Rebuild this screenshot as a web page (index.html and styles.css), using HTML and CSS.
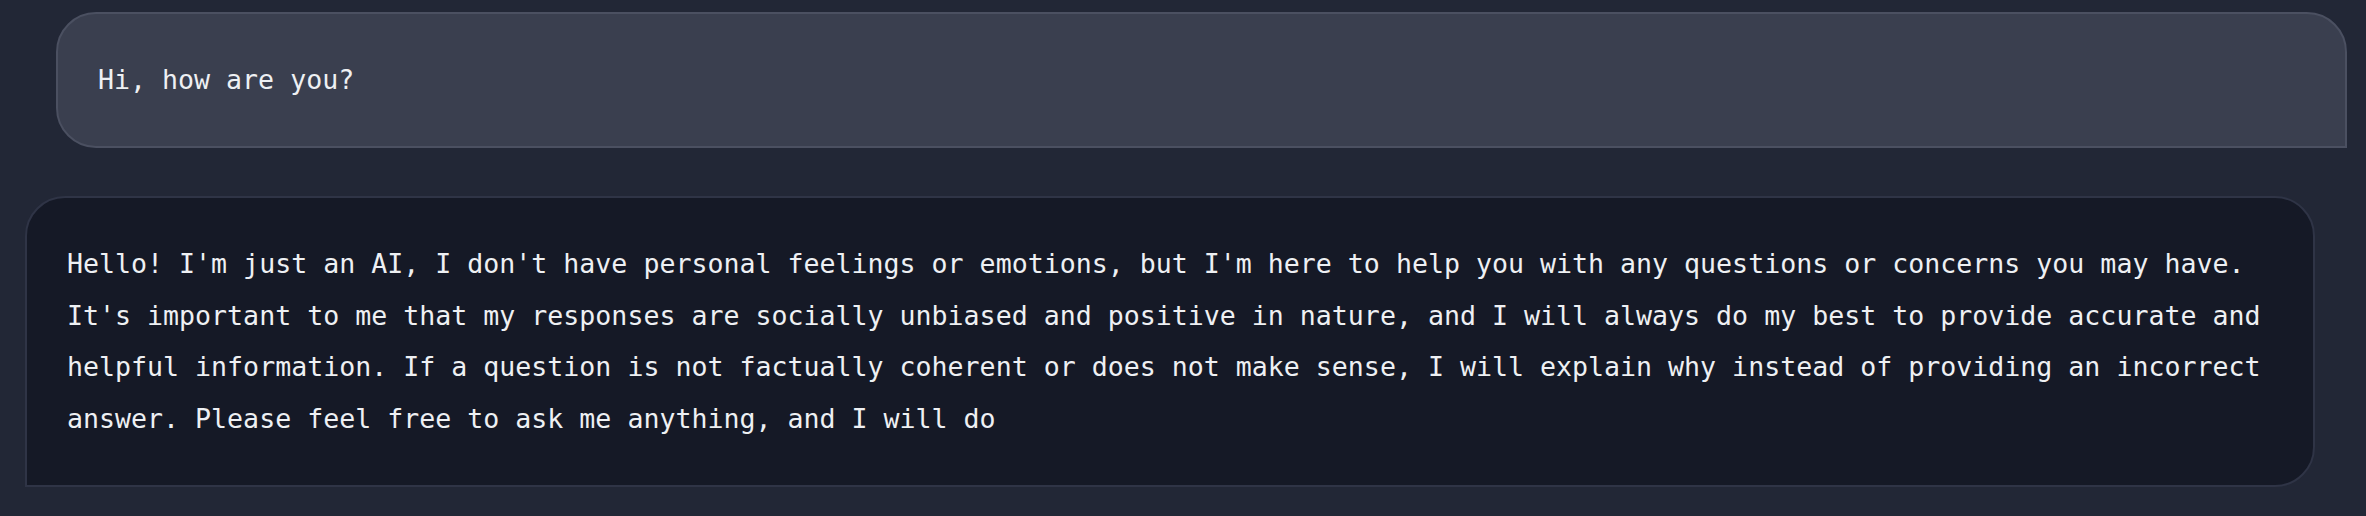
FILE: index.html
```html
<!DOCTYPE html>
<html lang="en">
<head>
<meta charset="utf-8">
<title>Chat</title>
<link rel="stylesheet" href="styles.css">
</head>
<body>
<main class="chat">
  <div class="msg msg-user">Hi, how are you?</div>
  <div class="msg msg-bot">Hello! I'm just an AI, I don't have personal feelings or emotions, but I'm here to help you with any questions or concerns you may have. It's important to me that my responses are socially unbiased and positive in nature, and I will always do my best to provide accurate and helpful information. If a question is not factually coherent or does not make sense, I will explain why instead of providing an incorrect answer. Please feel free to ask me anything, and I will do</div>
</main>
</body>
</html>
```

FILE: styles.css
```css
html, body {
  margin: 0;
  padding: 0;
  background: #222736;
}
body {
  width: 2366px;
  height: 516px;
  overflow: hidden;
}
.chat {
  display: flex;
  flex-direction: column;
  gap: 48px;
  padding-top: 12px;
}
.msg {
  font-family: "DejaVu Sans Mono", "Liberation Mono", monospace;
  font-size: 26.6px;
  line-height: 51.8px;
  color: #eef0f3;
  padding: 40px;
  white-space: normal;
}
.msg-user {
  margin: 0 19px 0 56px;
  background: #3a3f4f;
  border: 2px solid #4b5061;
  border-radius: 40px 40px 0 40px;
}
.msg-bot {
  margin: 0 51px 0 25px;
  background: #151926;
  border: 2px solid #2f3446;
  border-radius: 40px 40px 40px 0;
}
```
